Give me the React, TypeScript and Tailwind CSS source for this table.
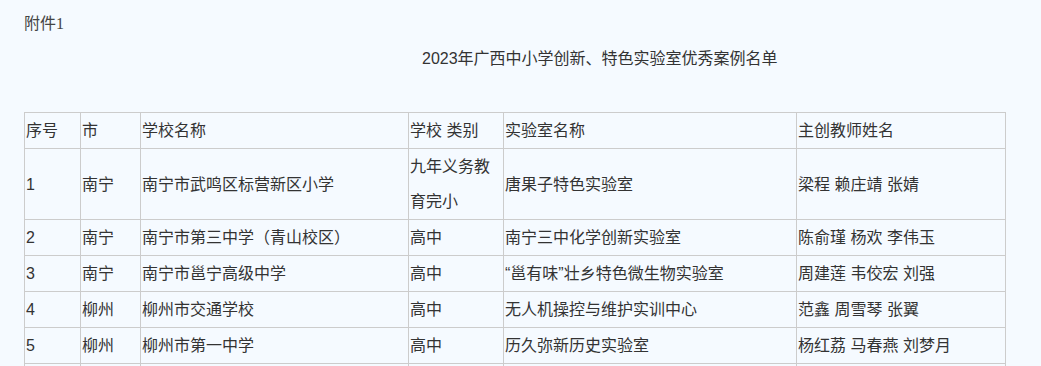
import React from 'react';

type Row = {
  no: string;
  city: string;
  school: string;
  type: string;
  lab: string;
  teachers: string;
};

const rows: Row[] = [
  { no: '1', city: '南宁', school: '南宁市武鸣区标营新区小学', type: '九年义务教育完小', lab: '唐果子特色实验室', teachers: '梁程 赖庄靖 张婧' },
  { no: '2', city: '南宁', school: '南宁市第三中学（青山校区）', type: '高中', lab: '南宁三中化学创新实验室', teachers: '陈俞瑾 杨欢 李伟玉' },
  { no: '3', city: '南宁', school: '南宁市邕宁高级中学', type: '高中', lab: '“邕有味”壮乡特色微生物实验室', teachers: '周建莲 韦佼宏 刘强' },
  { no: '4', city: '柳州', school: '柳州市交通学校', type: '高中', lab: '无人机操控与维护实训中心', teachers: '范鑫 周雪琴 张翼' },
  { no: '5', city: '柳州', school: '柳州市第一中学', type: '高中', lab: '历久弥新历史实验室', teachers: '杨红荔 马春燕 刘梦月' },
  { no: '', city: '', school: '', type: '', lab: '', teachers: '' },
];

const cell = 'border border-[#cccccc] px-px py-0 text-left align-middle font-normal leading-[35px]';

const App: React.FC = () => {
  return (
    <div
      className="min-h-screen bg-[#f5faff] pl-[24px] text-[16px] text-[#333333]"
      style={{ fontFamily: '"Liberation Sans", "Noto Sans CJK SC", sans-serif' }}
    >
      {/* attachment label renders in a serif face in the source */}
      <div className="pt-[10px] font-['Liberation_Serif','Noto_Sans_CJK_SC',serif] leading-[28px] text-[#444444]">附件1</div>
      <div className="mt-[7px] pl-[398px] leading-[28px]">2023年广西中小学创新、特色实验室优秀案例名单</div>

      <table className="mt-[39px] w-[981px] table-fixed border-collapse">
        <colgroup>
          <col className="w-[56px]" />
          <col className="w-[60px]" />
          <col className="w-[268px]" />
          <col className="w-[95px]" />
          <col className="w-[293px]" />
          <col className="w-[209px]" />
        </colgroup>
        <thead>
          <tr>
            <th className={cell}>序号</th>
            <th className={cell}>市</th>
            <th className={cell}>学校名称</th>
            <th className={cell}>学校 类别</th>
            <th className={cell}>实验室名称</th>
            <th className={cell}>主创教师姓名</th>
          </tr>
        </thead>
        <tbody>
          {rows.map((r, i) => (
            <tr key={i}>
              <td className={cell}>{r.no || '\u00a0'}</td>
              <td className={cell}>{r.city}</td>
              <td className={cell}>{r.school}</td>
              <td className={cell}>{r.type}</td>
              <td className={cell}>{r.lab}</td>
              <td className={cell}>{r.teachers}</td>
            </tr>
          ))}
        </tbody>
      </table>
    </div>
  );
};

export default App;
